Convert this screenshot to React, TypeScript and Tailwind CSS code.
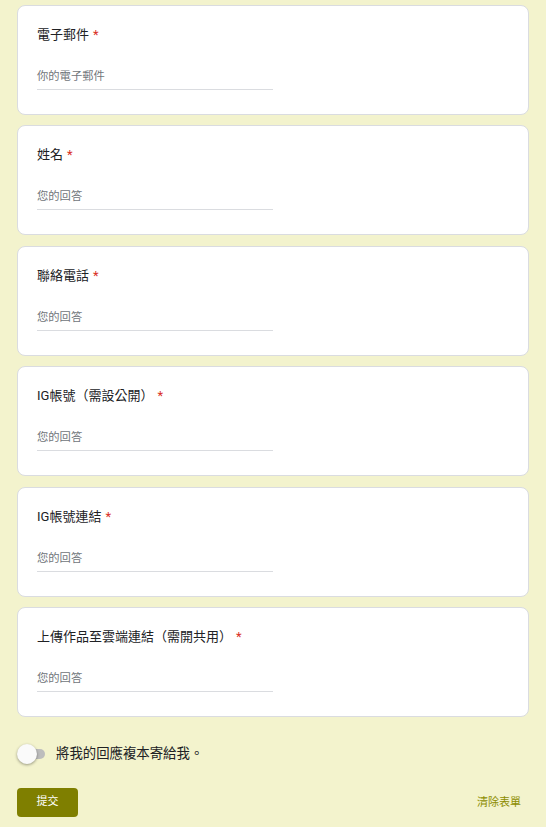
const font = { fontFamily: 'Roboto, "Noto Sans CJK TC", sans-serif' }

const questions = [
  { title: '電子郵件', placeholder: '你的電子郵件' },
  { title: '姓名', placeholder: '您的回答' },
  { title: '聯絡電話', placeholder: '您的回答' },
  { title: 'IG帳號（需設公開）', placeholder: '您的回答' },
  { title: 'IG帳號連結', placeholder: '您的回答' },
  { title: '上傳作品至雲端連結（需開共用）', placeholder: '您的回答' },
]

function QuestionCard({ title, placeholder }: { title: string; placeholder: string }) {
  return (
    <div className="h-[110px] rounded-lg border border-[#dadce0] bg-white pl-[19px] pt-[19px]">
      <div className="flex items-center text-[13px] leading-[20px] text-[#202124]">
        <span>{title}</span>
        <span className="ml-[4px] text-[#d93025]">*</span>
      </div>
      <div className="mt-[23px] w-[236px] border-b border-[#dadce0] pb-[4px] text-[11.3px] leading-[17px] text-[#70757a]">
        {placeholder}
      </div>
    </div>
  )
}

export default function App() {
  return (
    <div className="min-h-[827px] w-[546px] bg-[#f3f3cd] px-[17px] pt-[5px]" style={font}>
      <div className="flex w-[512px] flex-col gap-[10.4px]">
        {questions.map(q => (
          <QuestionCard key={q.title} {...q} />
        ))}
      </div>

      <div className="mt-[27px] flex items-center">
        <div className="relative h-[20px] w-[28px]">
          <div className="absolute left-[4px] top-[5px] h-[10px] w-[24px] rounded-full bg-[#bdbdbd]" />
          <div className="absolute left-0 top-0 h-[20px] w-[20px] rounded-full bg-[#fafafa] shadow-[0_1px_3px_rgba(0,0,0,0.4)]" />
        </div>
        <span className="ml-[11px] text-[13.4px] text-[#202124]">將我的回應複本寄給我。</span>
      </div>

      <div className="mt-[24px] flex items-center justify-between pr-[8px]">
        <button className="h-[29px] w-[61px] rounded-[4px] bg-[#7f7f00] text-[11px] text-white">提交</button>
        <span className="mt-[2px] text-[11px] text-[#8c8c00]">清除表單</span>
      </div>
    </div>
  )
}
